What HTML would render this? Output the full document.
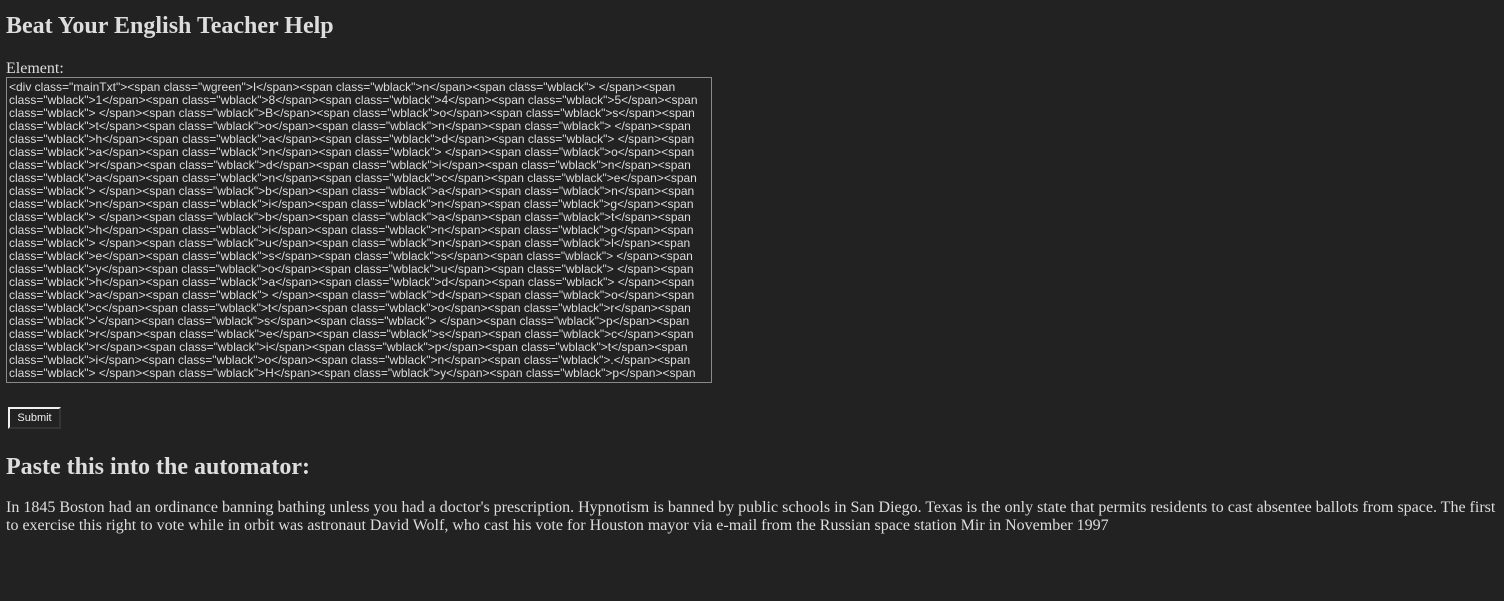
<!DOCTYPE html>
<html><head><meta charset="utf-8"><style>
body{margin:0;background:#222222;color:#dddddd;font-family:"Liberation Serif",serif;width:1504px;height:601px;overflow:hidden;position:relative}
.a{position:absolute;white-space:nowrap}
h1{position:absolute;left:6px;top:11px;margin:0;font-size:24px;font-weight:bold;line-height:30px}
h2{position:absolute;left:6px;top:452px;margin:0;font-size:24px;font-weight:bold;line-height:30px}
.ta{position:absolute;left:6px;top:77px;width:704px;height:304px;border:1px solid #8a8a8a;overflow:hidden;font-family:"Liberation Sans",sans-serif;font-size:12px;color:#dddddd}
.ta div{position:absolute;left:2px;white-space:pre;line-height:13px;letter-spacing:0px}
.btn{position:absolute;left:8px;top:407px;width:49px;height:18px;border:2px outset #ddd;border-color:#f0f0f0 #888 #888 #f0f0f0;font-family:"Liberation Sans",sans-serif;font-size:11px;line-height:18px;text-align:center;color:#eee;background:#222}
p{position:absolute;left:6px;top:499px;margin:0;width:1494px;font-size:16px;line-height:18px}
</style></head><body>
<h1>Beat Your English Teacher Help</h1>
<div class="a" style="left:6px;top:60px;font-size:16px;line-height:18px">Element:</div>
<div class="ta">
<div style="top:3px">&lt;div class="mainTxt"&gt;&lt;span class="wgreen"&gt;I&lt;/span&gt;&lt;span class="wblack"&gt;n&lt;/span&gt;&lt;span class="wblack"&gt; &lt;/span&gt;&lt;span</div>
<div style="top:16px">class="wblack"&gt;1&lt;/span&gt;&lt;span class="wblack"&gt;8&lt;/span&gt;&lt;span class="wblack"&gt;4&lt;/span&gt;&lt;span class="wblack"&gt;5&lt;/span&gt;&lt;span</div>
<div style="top:29px">class="wblack"&gt; &lt;/span&gt;&lt;span class="wblack"&gt;B&lt;/span&gt;&lt;span class="wblack"&gt;o&lt;/span&gt;&lt;span class="wblack"&gt;s&lt;/span&gt;&lt;span</div>
<div style="top:42px">class="wblack"&gt;t&lt;/span&gt;&lt;span class="wblack"&gt;o&lt;/span&gt;&lt;span class="wblack"&gt;n&lt;/span&gt;&lt;span class="wblack"&gt; &lt;/span&gt;&lt;span</div>
<div style="top:55px">class="wblack"&gt;h&lt;/span&gt;&lt;span class="wblack"&gt;a&lt;/span&gt;&lt;span class="wblack"&gt;d&lt;/span&gt;&lt;span class="wblack"&gt; &lt;/span&gt;&lt;span</div>
<div style="top:68px">class="wblack"&gt;a&lt;/span&gt;&lt;span class="wblack"&gt;n&lt;/span&gt;&lt;span class="wblack"&gt; &lt;/span&gt;&lt;span class="wblack"&gt;o&lt;/span&gt;&lt;span</div>
<div style="top:81px">class="wblack"&gt;r&lt;/span&gt;&lt;span class="wblack"&gt;d&lt;/span&gt;&lt;span class="wblack"&gt;i&lt;/span&gt;&lt;span class="wblack"&gt;n&lt;/span&gt;&lt;span</div>
<div style="top:94px">class="wblack"&gt;a&lt;/span&gt;&lt;span class="wblack"&gt;n&lt;/span&gt;&lt;span class="wblack"&gt;c&lt;/span&gt;&lt;span class="wblack"&gt;e&lt;/span&gt;&lt;span</div>
<div style="top:107px">class="wblack"&gt; &lt;/span&gt;&lt;span class="wblack"&gt;b&lt;/span&gt;&lt;span class="wblack"&gt;a&lt;/span&gt;&lt;span class="wblack"&gt;n&lt;/span&gt;&lt;span</div>
<div style="top:120px">class="wblack"&gt;n&lt;/span&gt;&lt;span class="wblack"&gt;i&lt;/span&gt;&lt;span class="wblack"&gt;n&lt;/span&gt;&lt;span class="wblack"&gt;g&lt;/span&gt;&lt;span</div>
<div style="top:133px">class="wblack"&gt; &lt;/span&gt;&lt;span class="wblack"&gt;b&lt;/span&gt;&lt;span class="wblack"&gt;a&lt;/span&gt;&lt;span class="wblack"&gt;t&lt;/span&gt;&lt;span</div>
<div style="top:146px">class="wblack"&gt;h&lt;/span&gt;&lt;span class="wblack"&gt;i&lt;/span&gt;&lt;span class="wblack"&gt;n&lt;/span&gt;&lt;span class="wblack"&gt;g&lt;/span&gt;&lt;span</div>
<div style="top:159px">class="wblack"&gt; &lt;/span&gt;&lt;span class="wblack"&gt;u&lt;/span&gt;&lt;span class="wblack"&gt;n&lt;/span&gt;&lt;span class="wblack"&gt;l&lt;/span&gt;&lt;span</div>
<div style="top:172px">class="wblack"&gt;e&lt;/span&gt;&lt;span class="wblack"&gt;s&lt;/span&gt;&lt;span class="wblack"&gt;s&lt;/span&gt;&lt;span class="wblack"&gt; &lt;/span&gt;&lt;span</div>
<div style="top:185px">class="wblack"&gt;y&lt;/span&gt;&lt;span class="wblack"&gt;o&lt;/span&gt;&lt;span class="wblack"&gt;u&lt;/span&gt;&lt;span class="wblack"&gt; &lt;/span&gt;&lt;span</div>
<div style="top:198px">class="wblack"&gt;h&lt;/span&gt;&lt;span class="wblack"&gt;a&lt;/span&gt;&lt;span class="wblack"&gt;d&lt;/span&gt;&lt;span class="wblack"&gt; &lt;/span&gt;&lt;span</div>
<div style="top:211px">class="wblack"&gt;a&lt;/span&gt;&lt;span class="wblack"&gt; &lt;/span&gt;&lt;span class="wblack"&gt;d&lt;/span&gt;&lt;span class="wblack"&gt;o&lt;/span&gt;&lt;span</div>
<div style="top:224px">class="wblack"&gt;c&lt;/span&gt;&lt;span class="wblack"&gt;t&lt;/span&gt;&lt;span class="wblack"&gt;o&lt;/span&gt;&lt;span class="wblack"&gt;r&lt;/span&gt;&lt;span</div>
<div style="top:237px">class="wblack"&gt;'&lt;/span&gt;&lt;span class="wblack"&gt;s&lt;/span&gt;&lt;span class="wblack"&gt; &lt;/span&gt;&lt;span class="wblack"&gt;p&lt;/span&gt;&lt;span</div>
<div style="top:250px">class="wblack"&gt;r&lt;/span&gt;&lt;span class="wblack"&gt;e&lt;/span&gt;&lt;span class="wblack"&gt;s&lt;/span&gt;&lt;span class="wblack"&gt;c&lt;/span&gt;&lt;span</div>
<div style="top:263px">class="wblack"&gt;r&lt;/span&gt;&lt;span class="wblack"&gt;i&lt;/span&gt;&lt;span class="wblack"&gt;p&lt;/span&gt;&lt;span class="wblack"&gt;t&lt;/span&gt;&lt;span</div>
<div style="top:276px">class="wblack"&gt;i&lt;/span&gt;&lt;span class="wblack"&gt;o&lt;/span&gt;&lt;span class="wblack"&gt;n&lt;/span&gt;&lt;span class="wblack"&gt;.&lt;/span&gt;&lt;span</div>
<div style="top:289px">class="wblack"&gt; &lt;/span&gt;&lt;span class="wblack"&gt;H&lt;/span&gt;&lt;span class="wblack"&gt;y&lt;/span&gt;&lt;span class="wblack"&gt;p&lt;/span&gt;&lt;span</div>
</div>
<div class="btn">Submit</div>
<h2>Paste this into the automator:</h2>
<p>In 1845 Boston had an ordinance banning bathing unless you had a doctor's prescription. Hypnotism is banned by public schools in San Diego. Texas is the only state that permits residents to cast absentee ballots from space. The first to exercise this right to vote while in orbit was astronaut David Wolf, who cast his vote for Houston mayor via e-mail from the Russian space station Mir in November 1997</p>
</body></html>
